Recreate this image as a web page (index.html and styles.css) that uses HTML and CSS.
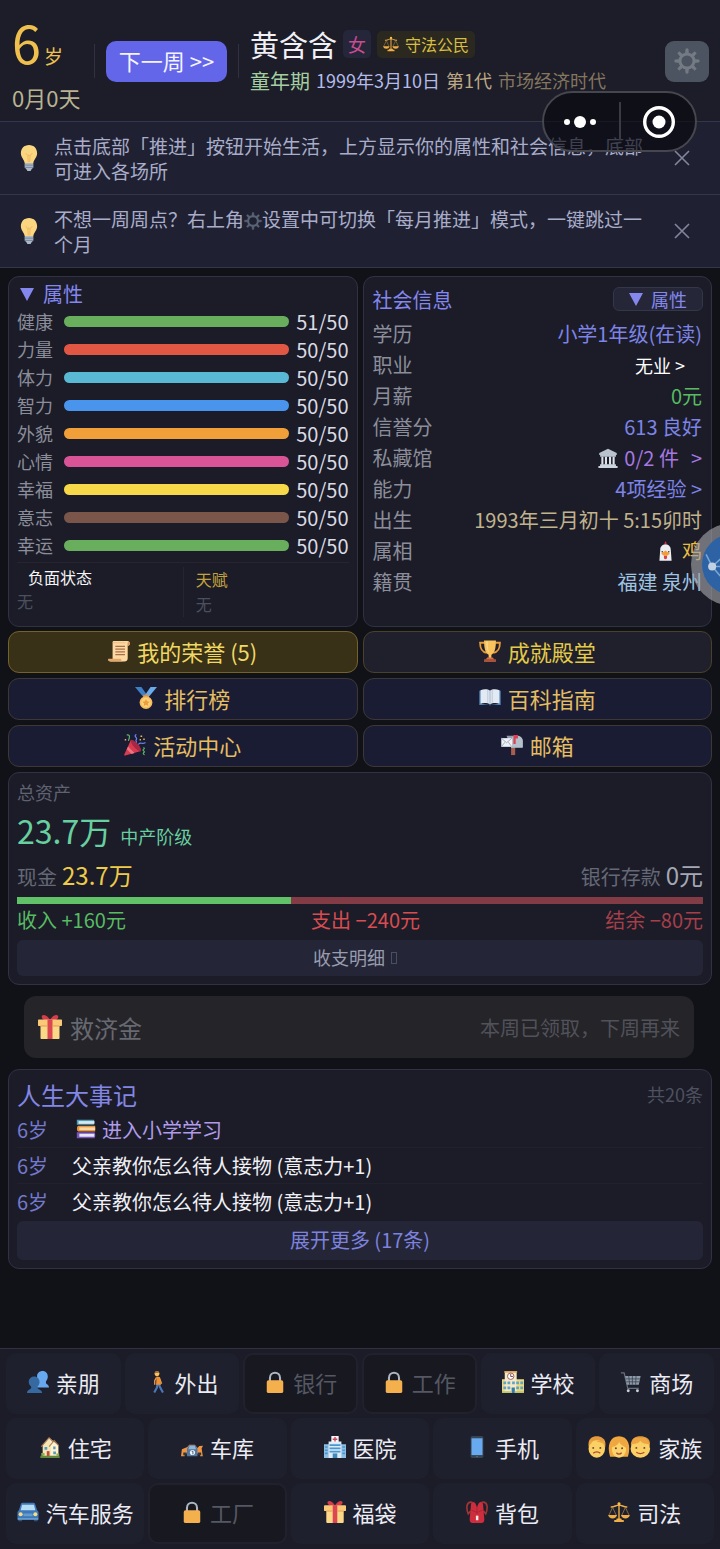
FILE: index.html
```html
<!DOCTYPE html>
<html lang="zh-CN">
<head>
    <meta charset="UTF-8">
    <meta name="viewport" content="width=device-width, initial-scale=1.0">
    <title>人生模拟</title>
    <link rel="stylesheet" href="styles.css">
</head>
<body>
    <!-- Icon sprites -->
    <svg class="sprites" aria-hidden="true">
        <symbol id="i-bulb" viewBox="0 0 24 24">
            <path d="M12 0C7.400 0 4.500 3.300 4.500 7.500c0 3.900 3 5.700 3.500 9h8c.5-3.300 3.500-5.100 3.500-9C19.500 3.300 16.600 0 12 0z" fill="#fbd680"/>
            <path d="M9 7.500l2 2.500 1-1 1 1 2-2.500M11 10l.3 6M13 10l-.3 6" fill="none" stroke="#eeb35a" stroke-width=".8"/>
            <path d="M8 16.500h8v4.300l-1.800 1.700-.7 1.500h-3l-.7-1.500L8 20.800z" fill="#aab8c8"/>
            <path d="M8 18.600h8M8 20.700h8" stroke="#68788a" stroke-width=".7"/>
        </symbol>
        <symbol id="i-gear" viewBox="0 0 24 24">
            <circle cx="12" cy="12" r="6.500" fill="none" stroke="currentColor" stroke-width="2.800"/>
            <path d="M10.600 5L11 .8h2l.4 4.200zM10.600 19l.4 4.200h2l.4-4.200zM5 10.600L.8 11v2l4.200.4zM19 10.600l4.200.4v2l-4.200.4zM6 8L3.400 4.800l1.400-1.400L8 6zM16 6l3.200-2.600 1.400 1.400L18 8zM6 16l-2.600 3.200 1.400 1.400L8 18zM16 18l3.200 2.600 1.400-1.400L18 16z" fill="currentColor" stroke="currentColor" stroke-width=".6" stroke-linejoin="round"/>
        </symbol>
        <symbol id="i-close" viewBox="0 0 16 16">
            <path d="M1 1l14 14M15 1L1 15" stroke="currentColor" stroke-width="1.600"/>
        </symbol>
        <symbol id="i-scales" viewBox="0 0 24 24">
            <g fill="none" stroke="#f0ad45" stroke-width="1.500" stroke-linecap="round">
                <path d="M12 2.500V20M3.500 6.500c4 0 5-2 8.500-2s4.500 2 8.500 2"/>
                <path d="M5 7l-4 8.500M5 7l4 8.500M19 7l-4 8.500M19 7l4 8.500" stroke="#a8844c" stroke-width=".8"/>
            </g>
            <circle cx="12" cy="3" r="1.700" fill="#f7bd55"/>
            <path d="M.2 15.200h9.600c-.5 2.500-2.300 3.800-4.800 3.800S.7 17.700.2 15.200zM14.200 15.200h9.600c-.5 2.500-2.300 3.800-4.800 3.800s-4.300-1.300-4.800-3.800zM9.500 19h5l.5 1.800h2.200V23H6.800v-2.200H9z" fill="#f0ad45"/>
        </symbol>
        <symbol id="i-museum" viewBox="0 0 24 24">
            <path d="M12 1l10.500 5v2.500h-21V6zM2.500 8.500h19v2h-19z" fill="#b8c3cf"/>
            <path d="M4 10.500h2.500V20H4zM8.300 10.500h2.500V20H8.300zM13.200 10.500h2.500V20h-2.500zM17.500 10.500H20V20h-2.500z" fill="#dce3ea"/>
            <path d="M2.500 19.500h19v2h-19zM.5 21.500h23V24H.5z" fill="#ccd5de"/>
        </symbol>
        <symbol id="i-rooster" viewBox="0 0 16 24">
            <path d="M8 0c1.500 1 1.500 3 1 5H7C6.300 3 6.800 1.500 8 0z" fill="#c9304a"/>
            <path d="M8 4c4 0 6.500 2.500 6.500 6.500L15.500 24H.5l1-13.500C1.500 6.500 4 4 8 4z" fill="#eceef2"/>
            <circle cx="4" cy="13" r="1" fill="#4a3a34"/><circle cx="12" cy="13" r="1" fill="#4a3a34"/>
            <path d="M2.500 15.500L8 11.500l5.500 4L8 19z" fill="#f59c38"/>
            <path d="M6.300 18h3.400c.8 2 0 4-1.700 4s-2.500-2-1.700-4z" fill="#d8404b"/>
        </symbol>
        <symbol id="i-scroll" viewBox="0 0 24 24">
            <path d="M6 1h15c2 0 2.800 1.200 2.800 2.800S23 6 21.500 6v14c0 2.500-1.500 3.500-3.500 3.500H3C1.200 23.500.2 22.500.2 21H5V3.500C5 2 5 1 6 1z" fill="#fbd9a0"/>
            <path d="M.2 20.500h14c0 2 1 3 2.300 3H3c-1.800 0-2.800-1-2.800-3z" fill="#e5a66c"/>
            <path d="M21.500 6V3.500c0-1.500 2.300-1.500 2.300.3 0 1.500-.8 2.200-2.300 2.200zM5 3h14" fill="#d9925b" stroke="#e5a66c" stroke-width=".6"/>
            <path d="M8 7h10.500M8 10h10.500M8 13h10.500M8 16h10.500" stroke="#a86f4e" stroke-width="1.200"/>
        </symbol>
        <symbol id="i-medal" viewBox="0 0 24 24">
            <path d="M0 0h7l7 10-4 2z" fill="#3f7fc6"/><path d="M24 0h-7l-7 10 4 2z" fill="#6aabea"/>
            <path d="M9 8.500h6v3H9z" fill="#dc9341"/>
            <circle cx="12" cy="17" r="7" fill="#f6bb5d"/><circle cx="12" cy="17" r="5.200" fill="#fbd27a"/>
            <path d="M12 13l1.200 2.600 2.800.4-2 1.900.5 2.800-2.500-1.400-2.500 1.400.5-2.800-2-1.900 2.800-.4z" fill="#ec9e3c"/>
        </symbol>
        <symbol id="i-party" viewBox="0 0 24 24">
            <path d="M7.500 6.500L18.500 18.500 1.500 23.500c-1 .3-1.500-.3-1.200-1.200z" fill="#d83a50"/>
            <path d="M4.500 13.500l7 7.200-3.200 1L3 16.500z" fill="#ea7482"/>
            <ellipse cx="13" cy="12.500" rx="2.600" ry="8" transform="rotate(-42 13 12.500)" fill="#a82744"/>
            <g fill="none" stroke-width="1.300" stroke-linecap="round">
                <path d="M3.500 1c3.500-.5 2.500 3 1.500 6" stroke="#62b665"/><path d="M13 .8c-3 2.500 3 3 0 6l.6 2" stroke="#6c82ed"/>
                <path d="M16 11c2-2.500 4 .5 7-1.500" stroke="#6c82ed"/><path d="M21.500 15c2.500 1-2.500 2 0 3.500s-2.500 2 .5 4" stroke="#5cb862"/>
            </g>
            <path d="M.8 5.500h1.600v1.600H.8zM18 1.500h1.800v1.800H18zM21 5h1.600v1.600H21zM17 5.500h1.500V7H17z" fill="#e8bb4c"/>
        </symbol>
        <symbol id="i-trophy" viewBox="0 0 24 24">
            <path d="M6 3H1.200c0 7 1.800 10 7.300 11M18 3h4.800c0 7-1.800 10-7.300 11" fill="none" stroke="#e79b38" stroke-width="2"/>
            <path d="M5.500.5h13C18.500 9 17 14.500 13.500 16v3.500h-3V16C7 14.500 5.500 9 5.500.5z" fill="#f8c25d"/>
            <path d="M8 1.500h1.500c0 6 .5 10 2 13C9 12.500 8 8 8 1.500z" fill="#fbdc8c"/>
            <path d="M9 19h6l2 2.500H7z" fill="#d96f42"/><path d="M5.500 21h13V24h-13z" fill="#a9533e"/>
        </symbol>
        <symbol id="i-openbook" viewBox="0 0 24 24">
            <path d="M.3 4L3 3.500v15l9 1 9-1v-15l2.700.5v15.500H13l-1 .8-1-.8H.3z" fill="#4e82b8"/>
            <path d="M1.700 3.500C5 2 9.500 2 12 4c2.500-2 7-2 10.300-.5V18C19 17 14.500 17 12 19c-2.500-2-7-2-10.300-1z" fill="#e3eaf3"/>
            <path d="M12 4v15" stroke="#9fb1c4" stroke-width="1"/><path d="M9.500 3.200v14M14.500 3.200v14" stroke="#c8d3df" stroke-width="1.600"/>
        </symbol>
        <symbol id="i-mailbox" viewBox="0 0 24 24">
            <path d="M11 13h4.500v10H11z" fill="#a85d50"/>
            <path d="M6 2h11.500c4 0 6.200 2.700 6.200 6v6.500H11z" fill="#8e9ead"/>
            <path d="M11 15V8c0-4 2-6 5.500-6 4 0 7.200 2 7.200 6v7z" fill="#b4c1cc"/>
            <path d="M.3 4.500H12V14H.3z" fill="#eef3f7"/><path d="M.3 4.500l5.800 5 5.900-5M.3 14l4-5M12 14L8 9" fill="none" stroke="#9aaaba" stroke-width="1"/>
            <path d="M13.500 1h5v4H16v6h-2.500z" fill="#dc4053"/>
        </symbol>
        <symbol id="i-gift" viewBox="0 0 24 24">
            <path d="M12 5C5 6 3 3 4 .8c1.500-2 6 0 8 4.200zM12 5c7 1 9-2 8-4.200-1.500-2-6 0-8 4.200z" fill="#d63d4c"/>
            <path d="M2.500 9h19v14c0 .6-.4 1-1 1h-17c-.6 0-1-.4-1-1z" fill="#fbd788"/>
            <path d="M1 4.500h22c.6 0 1 .4 1 1V10c0 .6-.4 1-1 1H1c-.6 0-1-.4-1-1V5.500c0-.6.4-1 1-1z" fill="#fbc878"/>
            <path d="M9.500 4.500h5V24h-5z" fill="#dc4650"/><path d="M2.500 11h7M14.500 11h7" stroke="#e09a54"/>
        </symbol>
        <symbol id="i-books" viewBox="0 0 24 24">
            <path d="M1 1h20c1.500 0 1.500 6 0 6H1z" fill="#4da1b8"/><path d="M3 2.500h19v3.300H3z" fill="#dce8ee"/>
            <path d="M3 8h20v7H3c-2.500 0-2.500-7 0-7z" fill="#e8943f"/><path d="M4 10h19v3.300H4z" fill="#f8d6a5"/>
            <path d="M1 16h21c1.500 0 1.500 7 0 7H1z" fill="#7855bb"/><path d="M4 17.700h18v3.600H4z" fill="#e8e5f2"/>
        </symbol>
        <symbol id="i-people" viewBox="0 0 24 24">
            <path d="M17 0c3.800 0 5.700 2.800 5.700 6 0 2.400-1 4-2 5.300V13c0 1.500 3.300 1.500 3.300 5H11V5.500C11 2.500 13.500 0 17 0z" fill="#68a8ee"/>
            <path d="M7.800 6c3.700 0 5.900 2.800 5.900 6 0 2.500-1.200 4-2.200 5v1.500c0 1.500 5 1.500 5 5.500H0c0-4 4.500-4 4.500-5.500V17c-1.300-1-2.600-2.500-2.600-5 0-3.200 2.200-6 5.900-6z" fill="#3669a0"/>
        </symbol>
        <symbol id="i-walk" viewBox="0 0 24 24">
            <path d="M12.500 14l-.5 4-3 5.500M14 14l1.500 4 3 5.500" fill="none" stroke="#4879ba" stroke-width="2.300"/>
            <path d="M11.500 6l3.500.5 1.500 8.500H11z" fill="#f09035"/>
            <path d="M11.500 7L9.500 10.500V15M14.500 7l2.500 7" fill="none" stroke="#e59a47" stroke-width="1.500"/>
            <circle cx="12" cy="3" r="2.700" fill="#fbc65c"/><path d="M9.500 2.500C9-.5 14-.5 14.500 2z" fill="#a86a3f"/>
        </symbol>
        <symbol id="i-lock" viewBox="0 0 24 24">
            <path d="M6.500 12V7.500c0-7.500 11-7.500 11 0V12" fill="none" stroke="#acb6c2" stroke-width="2.300"/>
            <rect x="3" y="10" width="18" height="14" rx="2" fill="#f4b04d"/>
        </symbol>
        <symbol id="i-school" viewBox="0 0 24 24">
            <path d="M0 9h24v15H0z" fill="#ebd982"/><path d="M3 1h13v23H3z" fill="#f5e8c7"/><path d="M2.500 0h14v1.800h-14z" fill="#dfa558"/>
            <circle cx="9.500" cy="5.700" r="3.500" fill="#fff" stroke="#9b5350"/><path d="M9.500 3v3h2.400" stroke="#5d4950" fill="none"/>
            <path d="M1.500 11.500h3v3h-3zM6 11.500h3v3H6zM11 11.500h3v3h-3zM15.500 11.500h3v3h-3zM20 11.500h3v3h-3zM1.500 17h3v3h-3zM6 17h3v3H6zM15.500 17h3v3h-3zM20 17h3v3h-3z" fill="#5fa5c9"/>
            <path d="M10.500 18h3.500v6h-3.500z" fill="#337ba5"/><path d="M0 22h10v2H0zM14 22h10v2H14z" fill="#b9c66c"/>
        </symbol>
        <symbol id="i-cart" viewBox="0 0 24 24">
            <path d="M1 2h3.500l4 17h12" fill="none" stroke="#66707d" stroke-width="1.300"/>
            <path d="M5.500 5.500h17L20.500 15h-13z" fill="#8d9aa7"/>
            <path d="M6 8.600h16M7 11.800h14M9.500 5.500l1 9.500M13.500 5.500V15M17.500 5.500L17 15" stroke="#353d4b" stroke-width=".8"/>
            <circle cx="9" cy="21.500" r="1.600" fill="#c9d1da"/><circle cx="19" cy="21.500" r="1.600" fill="#c9d1da"/>
        </symbol>
        <symbol id="i-house" viewBox="0 0 24 24">
            <path d="M4 10l7-8 10 8v12H4z" fill="#f4e5b7"/><path d="M11 2l10 9v11h-8V9z" fill="#fff2d0"/>
            <path d="M2.500 11.500L11 2l4 4M21.500 10.500L16.500 5 11 11.500" fill="none" stroke="#b48059" stroke-width="1.200"/>
            <path d="M6 12h3v3H6zM15.500 11.500h2.500v3h-2.500zM15.500 17h3v3h-3z" fill="#579cbf"/><path d="M8.500 16.500h3V22h-3z" fill="#c04a3b"/>
            <path d="M1.500 21.500h21V24h-21z" fill="#63893e"/><path d="M2.500 18.500H6v3H2.500zM19 19h3v2.500h-3z" fill="#8aad4d"/>
        </symbol>
        <symbol id="i-racecar" viewBox="0 0 24 24">
            <path d="M0 22l1-7.500L7 12l2-2.500h6l3 3.500 2-2 4-.5-1.500 3 1.300 8.500h-3v-3H4v3z" fill="#ef9440"/>
            <path d="M9 10h6.500l2.500 4v8H6.500v-8z" fill="#54779e"/><path d="M9.500 10.500h5.500l1.500 4H8z" fill="#8eb6d7"/>
            <circle cx="12.500" cy="18" r="2.800" fill="#eef3f8"/><path d="M11.700 16.700H13V20" fill="none" stroke="#365170"/>
            <path d="M2.500 18H6v3H2.500zM18.500 18H22v3h-3.500z" fill="#323641"/>
        </symbol>
        <symbol id="i-hospital" viewBox="0 0 24 24">
            <path d="M0 9h24v15H0z" fill="#8ebfe0"/><path d="M5 6h14v18H5z" fill="#dceaf6"/><path d="M8 0h8v7H8z" fill="#f4f6f9"/>
            <path d="M12 1v5M9.500 3.500h5" stroke="#cf4558" stroke-width="1.500"/>
            <path d="M6 10h12M6 13.500h12M6 17h12M1 12h3M1 15.500h3M1 19h3M20 12h3M20 15.500h3M20 19h3" stroke="#4896d2" stroke-width="1.800"/>
            <path d="M9.500 19h5v5h-5z" fill="#4189bb"/>
        </symbol>
        <symbol id="i-phone" viewBox="0 0 24 24">
            <rect x="5" y="0" width="14" height="24" rx="1.800" fill="#364553"/><path d="M6 2.500h12v18.300H6z" fill="#68aaf0"/><circle cx="12" cy="22.400" r=".7" fill="#7c8996"/>
        </symbol>
        <symbol id="i-family" viewBox="0 0 72 24">
            <path d="M2.500 14C-.5 4 5 0 11 0s12 4 9 14z" fill="#e49a3e"/><path d="M26 23C22 10 26 0 36 0s14 10 10 23z" fill="#f1a83f"/><path d="M50 12C48 4 53 0 60 0s13 4 10 12z" fill="#e39a3c"/>
            <ellipse cx="11" cy="14" rx="9.300" ry="10" fill="#fbd064"/><ellipse cx="36" cy="14.500" rx="8" ry="9.500" fill="#fdd46b"/><ellipse cx="60" cy="14" rx="11" ry="10" fill="#fbd064"/>
            <path d="M2 10C5 9 6 5 8 4c4 3 9 2 12 6V5H3zM28 12c5-1 8-4 8-6 2 4 5 5 9 7L42 4H31zM49 9c5 0 9-1 11-4 2 3 6 4 11 4L66 2H53z" fill="#eda642"/>
            <g fill="#69433b"><circle cx="7" cy="13" r="1.100"/><circle cx="15" cy="13" r="1.100"/><circle cx="32.500" cy="13.500" r="1.100"/><circle cx="39.500" cy="13.500" r="1.100"/><circle cx="55.500" cy="13" r="1.100"/><circle cx="64.500" cy="13" r="1.100"/></g>
            <path d="M7 19c2-2 6-2 8 0M33 18.500c2 2 4 2 6 0M55.500 18c3 2 6 2 9 0" fill="none" stroke="#a94a38" stroke-width="1.400"/>
        </symbol>
        <symbol id="i-car" viewBox="0 0 24 24">
            <path d="M1.500 18h4v4h-4zM18.500 18h4v4h-4z" fill="#315277"/>
            <path d="M4 4c0-1 1-2 2-2h12c1 0 2 1 2 2l2 6 1.500 2v8.500H.5V12L2 10z" fill="#3d78b9"/>
            <path d="M5.500 4h13l1.500 6H4z" fill="#b5dcf5"/><path d="M7 13.500h10v3H7zM1 18.500h22v2H1z" fill="#669bcb"/>
            <circle cx="4" cy="14.500" r="2.200" fill="#f4dc89"/><circle cx="20" cy="14.500" r="2.200" fill="#f4dc89"/>
        </symbol>
        <symbol id="i-bag" viewBox="0 0 24 24">
            <path d="M7 1.500C0 0 0 8 2.500 14L5 11M17 1.500c7-1.500 7 6.500 4.500 12.500L19 11" fill="none" stroke="#9f3534" stroke-width="1.800"/>
            <path d="M5.500 3c3-4 5-1 6.500 4 1.500-5 3.500-8 6.500-4l1.500 17c0 3-1 4-3 4H7c-2 0-3-1-3-4z" fill="#ce2d3d"/>
            <path d="M12 7v7M6 10l6 2.500 6-2.500" stroke="#a82435" fill="none"/><path d="M10.800 16h2.700v5h-2.700z" fill="#f3ebe4"/>
        </symbol>
        <symbol id="i-network" viewBox="0 0 60 60">
            <circle cx="30" cy="30" r="30" fill="#2d62a5"/>
            <path d="M10 32L21 22M10 32L22 46M10 32h24M21 22l12 8M4 20l6 12" stroke="#7ba9d4" stroke-width="1.500"/>
            <circle cx="10" cy="32" r="4" fill="#c3d2e2"/><circle cx="21" cy="22" r="2" fill="#91b8dc"/>
        </symbol>
    </svg>

    <header class="top-bar">
        <div class="age-box">
            <div class="age"><b>6</b><span>岁</span></div>
            <div class="age-detail">0月0天</div>
        </div>
        <i class="split"></i>
        <button class="next-btn">下一周 &gt;&gt;</button>
        <i class="split"></i>
        <div class="profile">
            <div class="name-row">
                <h1>黄含含</h1>
                <span class="gender">女</span>
                <span class="law-tag"><svg class="icon-sm"><use href="#i-scales"/></svg>守法公民</span>
            </div>
            <div class="era-row">
                <span class="stage">童年期</span>
                <span class="date">1999年3月10日</span>
                <span class="generation">第1代</span>
                <span class="era">市场经济时代</span>
            </div>
        </div>
        <button class="settings-btn" aria-label="设置"><svg><use href="#i-gear"/></svg></button>
    </header>

    <div class="tip">
        <svg class="tip-icon"><use href="#i-bulb"/></svg>
        <p>点击底部「推进」按钮开始生活，上方显示你的属性和社会信息，底部可进入各场所</p>
        <button class="tip-close" aria-label="关闭"><svg><use href="#i-close"/></svg></button>
    </div>
    <div class="tip">
        <svg class="tip-icon"><use href="#i-bulb"/></svg>
        <p>不想一周周点？右上角<svg class="inline-gear"><use href="#i-gear"/></svg>设置中可切换「每月推进」模式，一键跳过一个月</p>
        <button class="tip-close" aria-label="关闭"><svg><use href="#i-close"/></svg></button>
    </div>

    <main>
        <div class="two-col">
            <section class="panel attr-panel">
                <h2 class="attr-title"><i class="arrow"></i>属性</h2>
                <div class="attr"><span>健康</span><div class="bar green"></div><em>51/50</em></div>
                <div class="attr"><span>力量</span><div class="bar red"></div><em>50/50</em></div>
                <div class="attr"><span>体力</span><div class="bar cyan"></div><em>50/50</em></div>
                <div class="attr"><span>智力</span><div class="bar blue"></div><em>50/50</em></div>
                <div class="attr"><span>外貌</span><div class="bar orange"></div><em>50/50</em></div>
                <div class="attr"><span>心情</span><div class="bar pink"></div><em>50/50</em></div>
                <div class="attr"><span>幸福</span><div class="bar yellow"></div><em>50/50</em></div>
                <div class="attr"><span>意志</span><div class="bar brown"></div><em>50/50</em></div>
                <div class="attr"><span>幸运</span><div class="bar green"></div><em>50/50</em></div>
                <div class="status">
                    <div class="negative">
                        <h3>负面状态</h3>
                        <p>无</p>
                    </div>
                    <div class="talent">
                        <h3>天赋</h3>
                        <p>无</p>
                    </div>
                </div>
            </section>

            <section class="panel social-panel">
                <div class="social-head">
                    <h2>社会信息</h2>
                    <button class="attr-btn"><i class="arrow"></i>属性</button>
                </div>
                <dl>
                    <div><dt>学历</dt><dd>小学1年级(在读)</dd></div>
                    <div><dt>职业</dt><dd><button class="job-btn">无业 &gt;</button></dd></div>
                    <div><dt>月薪</dt><dd class="c-green">0元</dd></div>
                    <div><dt>信誉分</dt><dd>613 良好</dd></div>
                    <div><dt>私藏馆</dt><dd class="c-purple"><svg class="museum"><use href="#i-museum"/></svg>0/2 件<span class="more">&gt;</span></dd></div>
                    <div><dt>能力</dt><dd>4项经验 &gt;</dd></div>
                    <div><dt>出生</dt><dd class="c-sand">1993年三月初十 5:15卯时</dd></div>
                    <div><dt>属相</dt><dd class="c-gold"><svg class="rooster"><use href="#i-rooster"/></svg>鸡</dd></div>
                    <div><dt>籍贯</dt><dd class="c-sky">福建 泉州</dd></div>
                </dl>
            </section>
        </div>

        <div class="two-col links">
            <button class="link-btn honor"><svg class="icon"><use href="#i-scroll"/></svg>我的荣誉 (5)</button>
            <button class="link-btn achieve"><svg class="icon"><use href="#i-trophy"/></svg>成就殿堂</button>
            <button class="link-btn"><svg class="icon"><use href="#i-medal"/></svg>排行榜</button>
            <button class="link-btn"><svg class="icon"><use href="#i-openbook"/></svg>百科指南</button>
            <button class="link-btn"><svg class="icon"><use href="#i-party"/></svg>活动中心</button>
            <button class="link-btn"><svg class="icon"><use href="#i-mailbox"/></svg>邮箱</button>
        </div>

        <section class="panel assets">
            <div class="assets-label">总资产</div>
            <div class="total"><strong>23.7万</strong><span>中产阶级</span></div>
            <div class="money-row">
                <div>现金<b class="cash">23.7万</b></div>
                <div>银行存款<b>0元</b></div>
            </div>
            <div class="balance"><div style="width: 40%"></div></div>
            <div class="flow-row">
                <span class="c-green">收入 +160元</span>
                <span class="out">支出 −240元</span>
                <span class="rest">结余 −80元</span>
            </div>
            <button class="wide-btn detail">收支明细<i class="missing"></i></button>
        </section>

        <button class="relief" disabled>
            <svg class="icon"><use href="#i-gift"/></svg>
            <span>救济金</span>
            <small>本周已领取，下周再来</small>
        </button>

        <section class="panel events">
            <div class="events-head">
                <h2>人生大事记</h2>
                <span>共20条</span>
            </div>
            <ul>
                <li><span>6岁</span><p class="c-lilac"><svg class="books"><use href="#i-books"/></svg>进入小学学习</p></li>
                <li><span>6岁</span><p>父亲教你怎么待人接物 (意志力+1)</p></li>
                <li><span>6岁</span><p>父亲教你怎么待人接物 (意志力+1)</p></li>
            </ul>
            <button class="wide-btn expand">展开更多 (17条)</button>
        </section>
    </main>

    <nav>
        <div class="nav-row">
            <button><svg class="icon"><use href="#i-people"/></svg>亲朋</button>
            <button><svg class="icon"><use href="#i-walk"/></svg>外出</button>
            <button class="locked" disabled><svg class="icon"><use href="#i-lock"/></svg>银行</button>
            <button class="locked" disabled><svg class="icon"><use href="#i-lock"/></svg>工作</button>
            <button><svg class="icon"><use href="#i-school"/></svg>学校</button>
            <button><svg class="icon"><use href="#i-cart"/></svg>商场</button>
        </div>
        <div class="nav-row">
            <button><svg class="icon"><use href="#i-house"/></svg>住宅</button>
            <button><svg class="icon"><use href="#i-racecar"/></svg>车库</button>
            <button><svg class="icon"><use href="#i-hospital"/></svg>医院</button>
            <button><svg class="icon"><use href="#i-phone"/></svg>手机</button>
            <button><svg class="icon family"><use href="#i-family"/></svg>家族</button>
        </div>
        <div class="nav-row">
            <button><svg class="icon"><use href="#i-car"/></svg>汽车服务</button>
            <button class="locked" disabled><svg class="icon"><use href="#i-lock"/></svg>工厂</button>
            <button><svg class="icon"><use href="#i-gift"/></svg>福袋</button>
            <button><svg class="icon"><use href="#i-bag"/></svg>背包</button>
            <button><svg class="icon"><use href="#i-scales"/></svg>司法</button>
        </div>
    </nav>

    <!-- Mini program capsule -->
    <div class="capsule">
        <button aria-label="更多">
            <svg viewBox="0 0 32 12" width="32" height="12" fill="#fff"><circle cx="3" cy="6" r="3"/><circle cx="16" cy="6" r="6"/><circle cx="29" cy="6" r="3"/></svg>
        </button>
        <button aria-label="退出">
            <svg viewBox="0 0 32 32" width="32" height="32" fill="#fff"><circle cx="16" cy="16" r="14.300" fill="none" stroke="#fff" stroke-width="3.400"/><circle cx="16" cy="16" r="6.500"/></svg>
        </button>
    </div>
    <button class="float-ball" aria-label="悬浮球"><svg><use href="#i-network"/></svg></button>
</body>
</html>
```
FILE: styles.css
```css
* {
    box-sizing: border-box;
}
body {
    font-family: "Noto Sans CJK SC", sans-serif;
    font-size: 20px;
    color: #f0f0f5;
    background: #111218;
    margin: 0;
    min-height: 100vh;
    display: flex;
    flex-direction: column;
    overflow-x: hidden;
}
h1, h2, h3, p, ul, dl, dd {
    margin: 0;
    padding: 0;
    font-weight: 400;
}
button {
    font-family: inherit;
    font-size: 22px;
    color: inherit;
    background: none;
    border: none;
    padding: 0;
    cursor: pointer;
}
em, i {
    font-style: normal;
}
svg {
    display: block;
    flex: none;
}
.sprites {
    position: absolute;
    width: 0;
    height: 0;
}
.icon {
    width: 22px;
    height: 22px;
}

/* Header */
.top-bar {
    display: flex;
    align-items: center;
    gap: 11px;
    padding: 12px 11px 11px 12px;
    background: #1c1d29;
}
.age-box {
    width: 71px;
}
.age {
    display: flex;
    align-items: baseline;
    gap: 3px;
    height: 72px;
    color: #efc04e;
}
.age b {
    font-size: 52px;
    line-height: 60px;
    font-weight: 400;
}
.age span {
    font-size: 19px;
    line-height: 24px;
}
.age-detail {
    font-size: 22px;
    line-height: 26px;
    color: #b9b391;
}
.split {
    width: 1px;
    height: 34px;
    background: #303241;
}
.next-btn {
    width: 121px;
    height: 41px;
    padding-bottom: 2px;
    border-radius: 10px;
    background: #6466e9;
    color: #f4f4ff;
}
.profile {
    padding-top: 2px;
    white-space: nowrap;
}
.name-row, .era-row {
    display: flex;
    align-items: center;
    height: 36px;
    gap: 6px;
}
.name-row h1 {
    font-size: 29px;
}
.gender {
    padding: 0 5px;
    line-height: 28px;
    border-radius: 5px;
    background: #25263a;
    color: #cb4c91;
    font-size: 18px;
}
.law-tag {
    display: flex;
    align-items: center;
    gap: 6px;
    padding: 0 6px;
    line-height: 27px;
    border-radius: 5px;
    background: #2b291f;
    color: #d8bd43;
    font-size: 16px;
}
.icon-sm {
    width: 16px;
    height: 16px;
}
.era-row {
    font-size: 18px;
}
.stage {
    font-size: 20px;
    color: #a5cfa0;
}
.date {
    color: #b3bce9;
}
.generation {
    color: #bfa883;
}
.era {
    color: #85765f;
}
.settings-btn {
    display: flex;
    align-items: center;
    justify-content: center;
    width: 44px;
    height: 41px;
    margin-left: auto;
    border-radius: 9px;
    background: #4d5461;
    color: #747b84;
}
.settings-btn svg {
    width: 26px;
    height: 26px;
}

/* Tips */
.tip {
    display: flex;
    align-items: center;
    padding: 11px 30px 11px 16px;
    border-top: 1px solid #343749;
    background: #1f2132;
}
.tip + main {
    border-top: 1px solid #343749;
}
.tip-icon {
    width: 26px;
    height: 26px;
}
.tip p {
    flex: 1;
    margin: 0 24px 0 12px;
    font-size: 19px;
    line-height: 25px;
    color: #a9adca;
}
.inline-gear {
    display: inline-block;
    width: 18px;
    height: 18px;
    vertical-align: -3px;
    color: #596374;
}
.tip-close {
    color: #83869a;
}
.tip-close svg {
    width: 16px;
    height: 16px;
}

/* Panels */
main {
    padding: 8px 8px 0;
    margin-bottom: 20px;
}
.two-col {
    display: grid;
    grid-template-columns: 1fr 1fr;
    gap: 5px;
}
.panel {
    border: 1px solid #303244;
    border-radius: 11px;
    background: #1b1c28;
}
.attr-panel {
    padding: 4px 8px 9px;
}
.attr-title {
    display: flex;
    align-items: center;
    gap: 9px;
    padding-left: 3px;
    font-size: 20px;
    line-height: 26px;
    color: #8487ee;
}
.arrow {
    border: 7px solid transparent;
    border-top: 13px solid #8487ee;
    border-bottom: 0;
}
.attr {
    display: flex;
    align-items: center;
    height: 28px;
}
.attr span {
    width: 47px;
    font-size: 18px;
    color: #8b8e9a;
}
.bar {
    flex: 1;
    height: 11px;
    border-radius: 6px;
}
.attr em {
    width: 60px;
    text-align: right;
    color: #d9dae3;
}
.green { background: #68ae5d; }
.red { background: #e25744; }
.cyan { background: #59b9d4; }
.blue { background: #4994ec; }
.orange { background: #f19f38; }
.pink { background: #d85497; }
.yellow { background: #f7d849; }
.brown { background: #795649; }

.status {
    display: grid;
    grid-template-columns: 1fr 1fr;
    margin-top: 3px;
    padding-top: 4px;
    border-top: 1px solid #27242f;
    font-size: 16px;
    line-height: 24px;
    color: #4c505e;
}
.negative h3 {
    font-size: 16px;
    padding-left: 11px;
    line-height: 20px;
    color: #f5f5f5;
}
.negative p {
    line-height: 28px;
}
.talent {
    padding-left: 12px;
    border-left: 1px solid #252530;
}
.talent h3 {
    font-size: 16px;
    color: #c5a33c;
}
.talent p {
    line-height: 26px;
}
.social-panel {
    padding: 6px 8px 22px 9px;
}
.social-head {
    display: flex;
    align-items: center;
    justify-content: space-between;
    height: 32px;
    margin-bottom: 3px;
}
.social-head h2 {
    font-size: 20px;
    color: #8487ee;
}
.attr-btn {
    display: flex;
    align-items: center;
    justify-content: center;
    gap: 8px;
    width: 90px;
    height: 24px;
    border: 1px solid #34364a;
    border-radius: 6px;
    background: #252738;
    color: #8487ee;
    font-size: 18px;
}
dl div {
    display: flex;
    align-items: center;
    justify-content: space-between;
    height: 31px;
    padding-right: 1px;
}
dt {
    color: #8b8e9a;
}
dd {
    display: flex;
    align-items: center;
    color: #7d84e6;
}
.job-btn {
    padding-right: 17px;
    font-size: 18px;
    color: #fff;
}
.c-green { color: #57bb62; }
.c-purple { color: #a878e2; }
.c-sand { color: #c1b38d; }
.c-gold { color: #e9bd43; }
.c-sky { color: #9fc4e2; }
.c-lilac { color: #b09be8; }
.museum {
    width: 20px;
    height: 20px;
    margin-right: 6px;
}
.more {
    margin-left: 12px;
}
.rooster {
    width: 13px;
    height: 20px;
    margin-right: 10px;
}

/* Link buttons */
.links {
    margin: 4px 0 5px;
}
.link-btn {
    display: flex;
    align-items: center;
    justify-content: center;
    gap: 7px;
    height: 42px;
    padding-bottom: 2px;
    border: 1px solid #3d3837;
    border-radius: 11px;
    background: #191c32;
    color: #e5bd62;
}
.honor {
    border-color: #74622b;
    background: #393018;
    color: #f0d963;
}
.achieve {
    border-color: #4a412b;
    background: #20202d;
    color: #e3cb48;
}

/* Assets */
.assets {
    padding: 6px 8px 8px;
}
.assets-label {
    font-size: 18px;
    line-height: 26px;
    color: #5f6271;
}
.total {
    display: flex;
    align-items: baseline;
    gap: 9px;
    height: 52px;
    line-height: 50px;
    color: #68cfa0;
}
.total strong {
    font-size: 32px;
    font-weight: 400;
}
.total span {
    font-size: 18px;
}
.money-row, .flow-row {
    display: flex;
    justify-content: space-between;
}
.money-row {
    line-height: 36px;
    height: 40px;
    color: #656876;
}
.money-row b {
    margin-left: 5px;
    font-size: 24px;
    font-weight: 400;
    color: #a4a8b4;
}
.money-row .cash {
    color: #eecb48;
}
.balance {
    height: 7px;
    background: #833c45;
}
.balance div {
    height: 7px;
    background: #61c168;
}
.flow-row {
    height: 36px;
    line-height: 32px;
}
.out {
    color: #d94c50;
}
.rest {
    color: #a63f48;
}
.wide-btn {
    display: flex;
    align-items: center;
    justify-content: center;
    width: 100%;
    padding-bottom: 2px;
    border-radius: 6px;
    background: #242637;
}
.detail {
    height: 36px;
    font-size: 18px;
    color: #999caf;
}
.missing {
    width: 6px;
    height: 12px;
    margin: 2px 10px 0 6px;
    border: 1px solid #4b4e60;
}

/* Relief fund */
.relief {
    display: flex;
    align-items: center;
    width: calc(100% - 34px);
    height: 62px;
    margin: 11px 18px 11px 16px;
    padding: 0 14px;
    border-radius: 12px;
    background: #242429;
    color: #676971;
    font-size: 24px;
}
.relief .icon {
    width: 24px;
    height: 24px;
    margin-right: 8px;
}
.relief small {
    margin-left: auto;
    font-size: 20px;
    color: #515259;
}

/* Events */
.events {
    padding: 7px 8px 8px;
}
.events-head {
    display: flex;
    align-items: center;
    justify-content: space-between;
    height: 34px;
}
.events-head h2 {
    font-size: 24px;
    color: #8286e5;
}
.events-head span {
    font-size: 18px;
    color: #4e515f;
}
.events li {
    display: flex;
    align-items: center;
    height: 36px;
}
.events li + li {
    border-top: 1px solid #20212d;
}
.events li span {
    width: 55px;
    color: #7479cd;
}
.events li p {
    display: flex;
    align-items: center;
}
.books {
    width: 20px;
    height: 20px;
    margin: 0 6px 0 4px;
}
.expand {
    height: 39px;
    margin-top: 2px;
    font-size: 20px;
    color: #7d82df;
}

/* Bottom navigation */
nav {
    display: flex;
    flex-direction: column;
    gap: 4px;
    margin-top: auto;
    padding: 4px 6px 5px;
    border-top: 1px solid #2f313d;
    background: #1b1c28;
}
.nav-row {
    display: flex;
    gap: 4px;
}
.nav-row button {
    display: flex;
    align-items: center;
    justify-content: center;
    flex: 1;
    gap: 7px;
    height: 61px;
    padding-bottom: 3px;
    border: 2px solid #1e202c;
    border-radius: 10px;
    background: #1f202e;
    color: #ececf4;
}
.nav-row .locked {
    border-color: #20212c;
    background: #171820;
    color: #555763;
}
.nav-row .family {
    width: 64px;
}

/* Overlays */
.capsule {
    position: fixed;
    top: 91px;
    right: 23px;
    display: flex;
    gap: 6px;
    width: 155px;
    height: 61px;
    border: 2px solid #45464e;
    border-radius: 31px;
    background: rgba(8, 8, 14, 0.65);
}
.capsule button {
    display: flex;
    align-items: center;
    justify-content: center;
    flex: 1;
}
.capsule::before {
    content: "";
    position: absolute;
    left: 75px;
    top: 9px;
    width: 2px;
    height: 38px;
    background: #3a3b43;
}
.float-ball {
    position: fixed;
    top: 523px;
    right: -54px;
    width: 83px;
    height: 83px;
    padding: 11px;
    border-radius: 50%;
    background: rgba(160, 160, 166, 0.65);
}
.float-ball svg {
    width: 61px;
    height: 61px;
}
```
